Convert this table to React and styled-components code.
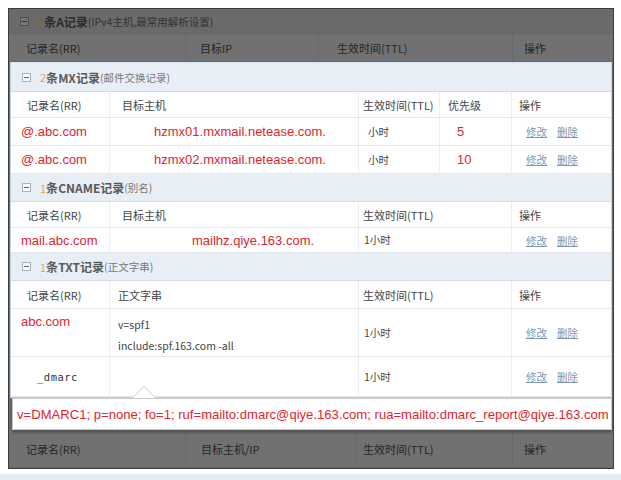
import React from 'react';
import styled, { createGlobalStyle } from 'styled-components';

const GlobalStyle = createGlobalStyle`
  body {
    margin: 0;
    background: #fff;
    font-family: "Liberation Sans", "Noto Sans CJK SC", sans-serif;
  }
`;

const cjk = `"Noto Sans CJK SC", "Liberation Sans", sans-serif`;
const latin = `"Liberation Sans", "Noto Sans CJK SC", sans-serif`;

const Page = styled.div`
  width: 621px;
  height: 480px;
  padding-top: 8px;
  box-sizing: border-box;
`;

const Frame = styled.div`
  margin-left: 8px;
  width: 606px;
  height: 461px;
  box-sizing: border-box;
  border: 1px solid #3c3c3c;
  background: #6e6e6e;
  display: flex;
  flex-direction: column;
  overflow: hidden;
`;

const Strip = styled.div`
  margin-top: 5px;
  height: 6px;
  background: #e6edf4;
`;

const SectionHead = styled.div`
  height: ${(p) => p.h}px;
  box-sizing: border-box;
  display: flex;
  align-items: center;
  padding-left: 11px;
  font-family: ${cjk};
  background: ${(p) => (p.dim ? '#6a6a6a' : '#e8eef5')};
  border-bottom: 1px solid ${(p) => (p.dim ? '#666' : '#d3dde8')};
`;

const Toggle = styled.span`
  width: 9px;
  height: 9px;
  box-sizing: border-box;
  border: 1px solid ${(p) => (p.dim ? '#4e4e4e' : '#a9b3bd')};
  background: ${(p) => (p.dim ? '#777' : '#f7f9fb')};
  display: inline-flex;
  align-items: center;
  justify-content: center;
  margin-right: 9px;
  &::after {
    content: '';
    width: 5px;
    height: 1px;
    background: ${(p) => (p.dim ? '#333' : '#666')};
  }
`;

const Count = styled.span`
  font-size: 11px;
  color: ${(p) => (p.dim ? '#7d6434' : '#e6a947')};
`;

const Title = styled.span`
  font-size: 12px;
  font-weight: 700;
  color: ${(p) => (p.dim ? '#2c2c2c' : '#5a5a5a')};
`;

const Note = styled.span`
  font-size: 10.5px;
  color: ${(p) => (p.dim ? '#333' : '#777')};
`;

const Row = styled.div`
  display: grid;
  grid-template-columns: ${(p) => p.cols};
  height: ${(p) => p.h}px;
  box-sizing: border-box;
  border-bottom: 1px solid ${(p) => (p.dim ? '#676767' : '#e4e6e9')};
  background: ${(p) => (p.dim ? '#717171' : '#fff')};
`;

const Cell = styled.div`
  display: flex;
  flex-direction: column;
  justify-content: ${(p) => (p.top ? 'flex-start' : 'center')};
  padding-left: ${(p) => p.pad ?? 10}px;
  padding-top: ${(p) => (p.top ? 5 : 0)}px;
  border-left: 1px solid ${(p) => (p.first ? 'transparent' : p.dim ? '#6a6a6a' : '#eceef0')};
  overflow: hidden;
  white-space: nowrap;
`;

const Label = styled.span`
  font-family: ${cjk};
  font-size: 11px;
  color: ${(p) => (p.dim ? '#262626' : '#444')};
`;

const Red = styled.span`
  font-family: ${latin};
  font-size: 13px;
  color: #e0242c;
`;

const Plain = styled.span`
  font-family: ${cjk};
  font-size: 10.5px;
  color: #444;
  line-height: ${(p) => p.lh ?? 22}px;
`;

const Mono = styled.span`
  font-family: "DejaVu Sans Mono", monospace;
  font-size: 10.5px;
  color: #333;
  letter-spacing: 0.5px;
`;

const Links = styled.div`
  display: flex;
  gap: 10px;
`;

const Link = styled.span`
  font-family: ${cjk};
  font-size: 10.5px;
  color: #7c98b0;
  text-decoration: underline;
`;

const Popup = styled.div`
  height: 336px;
  box-sizing: border-box;
  margin: 0 1px 0 1px;
  border: 1px solid #c4d3e2;
  border-top-color: #d8e6f3;
  background: #fff;
  display: flex;
  flex-direction: column;
`;

const TipWrap = styled.div`
  position: relative;
  z-index: 2;
`;

const Tip = styled.div`
  height: 32px;
  box-sizing: border-box;
  margin: 0 1px 0 3px;
  background: #fff;
  border: 1px solid #c9c9c9;
  box-shadow: 0 2px 3px rgba(0, 0, 0, 0.35);
  display: flex;
  align-items: center;
  padding-left: 4px;
  white-space: nowrap;
  overflow: hidden;
`;

const Arrow = styled.div`
  position: absolute;
  left: 123px;
  top: -12px;
  width: 0;
  height: 0;
  border-left: 12px solid transparent;
  border-right: 12px solid transparent;
  border-bottom: 12px solid #c9c9c9;
  &::after {
    content: '';
    position: absolute;
    left: -11px;
    top: 1px;
    border-left: 11px solid transparent;
    border-right: 11px solid transparent;
    border-bottom: 11px solid #fff;
  }
`;

const TipText = styled.span`
  font-family: ${latin};
  font-size: 13.1px;
  color: #e0242c;
`;

const mxCols = '98px 249px 81px 72px 1fr';
const twoCols = '98px 249px 153px 1fr';
const dimCols = '176px 133px 194px 1fr';
const dimCols2 = '176px 170px 157px 1fr';

function Ops() {
  return (
    <Links>
      <Link>修改</Link>
      <Link>删除</Link>
    </Links>
  );
}

function Head({ count, title, note, h, dim }) {
  return (
    <SectionHead h={h} dim={dim}>
      <Toggle dim={dim} />
      <Count dim={dim}>{count}</Count>
      <Title dim={dim}>条{title}</Title>
      <Note dim={dim}>({note})</Note>
    </SectionHead>
  );
}

export default function App() {
  return (
    <>
      <GlobalStyle />
      <Page>
        <Frame>
          <Head dim h={25} count="0" title="A记录" note="IPv4主机,最常用解析设置" />
          <Row dim cols={dimCols} h={28}>
            <Cell dim first pad={16}><Label dim>记录名(RR)</Label></Cell>
            <Cell dim pad={14}><Label dim>目标IP</Label></Cell>
            <Cell dim pad={18}><Label dim>生效时间(TTL)</Label></Cell>
            <Cell dim pad={11}><Label dim>操作</Label></Cell>
          </Row>

          <Popup>
            <Head h={29} count="2" title="MX记录" note="邮件交换记录" />
            <Row cols={mxCols} h={26}>
              <Cell first pad={15}><Label>记录名(RR)</Label></Cell>
              <Cell pad={12}><Label>目标主机</Label></Cell>
              <Cell pad={4}><Label>生效时间(TTL)</Label></Cell>
              <Cell pad={8}><Label>优先级</Label></Cell>
              <Cell pad={7}><Label>操作</Label></Cell>
            </Row>
            {[
              ['hzmx01.mxmail.netease.com.', '5'],
              ['hzmx02.mxmail.netease.com.', '10'],
            ].map(([host, prio]) => (
              <Row key={host} cols={mxCols} h={28}>
                <Cell first pad={9}><Red>@.abc.com</Red></Cell>
                <Cell pad={44}><Red>{host}</Red></Cell>
                <Cell pad={9}><Plain>小时</Plain></Cell>
                <Cell pad={17}><Red>{prio}</Red></Cell>
                <Cell pad={14}><Ops /></Cell>
              </Row>
            ))}

            <Head h={28} count="1" title="CNAME记录" note="别名" />
            <Row cols={twoCols} h={26}>
              <Cell first pad={15}><Label>记录名(RR)</Label></Cell>
              <Cell pad={12}><Label>目标主机</Label></Cell>
              <Cell pad={4}><Label>生效时间(TTL)</Label></Cell>
              <Cell pad={7}><Label>操作</Label></Cell>
            </Row>
            <Row cols={twoCols} h={25}>
              <Cell first pad={9}><Red>mail.abc.com</Red></Cell>
              <Cell pad={82}><Red>mailhz.qiye.163.com.</Red></Cell>
              <Cell pad={5}><Plain>1小时</Plain></Cell>
              <Cell pad={14}><Ops /></Cell>
            </Row>

            <Head h={28} count="1" title="TXT记录" note="正文字串" />
            <Row cols={twoCols} h={28}>
              <Cell first pad={15}><Label>记录名(RR)</Label></Cell>
              <Cell pad={8}><Label>正文字串</Label></Cell>
              <Cell pad={4}><Label>生效时间(TTL)</Label></Cell>
              <Cell pad={7}><Label>操作</Label></Cell>
            </Row>
            <Row cols={twoCols} h={48}>
              <Cell first top pad={9}><Red>abc.com</Red></Cell>
              <Cell top pad={8}>
                <Plain lh={21}>v=spf1</Plain>
                <Plain lh={21}>include:spf.163.com -all</Plain>
              </Cell>
              <Cell pad={5}><Plain>1小时</Plain></Cell>
              <Cell pad={14}><Ops /></Cell>
            </Row>
            <Row cols={twoCols} h={40}>
              <Cell first pad={25}><Mono>_dmarc</Mono></Cell>
              <Cell pad={8} />
              <Cell pad={5}><Plain>1小时</Plain></Cell>
              <Cell pad={14}><Ops /></Cell>
            </Row>
          </Popup>

          <TipWrap>
            <Arrow />
            <Tip>
              <TipText>
                v=DMARC1; p=none; fo=1; ruf=mailto:dmarc@qiye.163.com; rua=mailto:dmarc_report@qiye.163.com
              </TipText>
            </Tip>
          </TipWrap>

          <Row dim cols={dimCols2} h={38}>
            <Cell dim first pad={16}><Label dim>记录名(RR)</Label></Cell>
            <Cell dim pad={15}><Label dim>目标主机/IP</Label></Cell>
            <Cell dim pad={7}><Label dim>生效时间(TTL)</Label></Cell>
            <Cell dim pad={11}><Label dim>操作</Label></Cell>
          </Row>
        </Frame>
        <Strip />
      </Page>
    </>
  );
}
